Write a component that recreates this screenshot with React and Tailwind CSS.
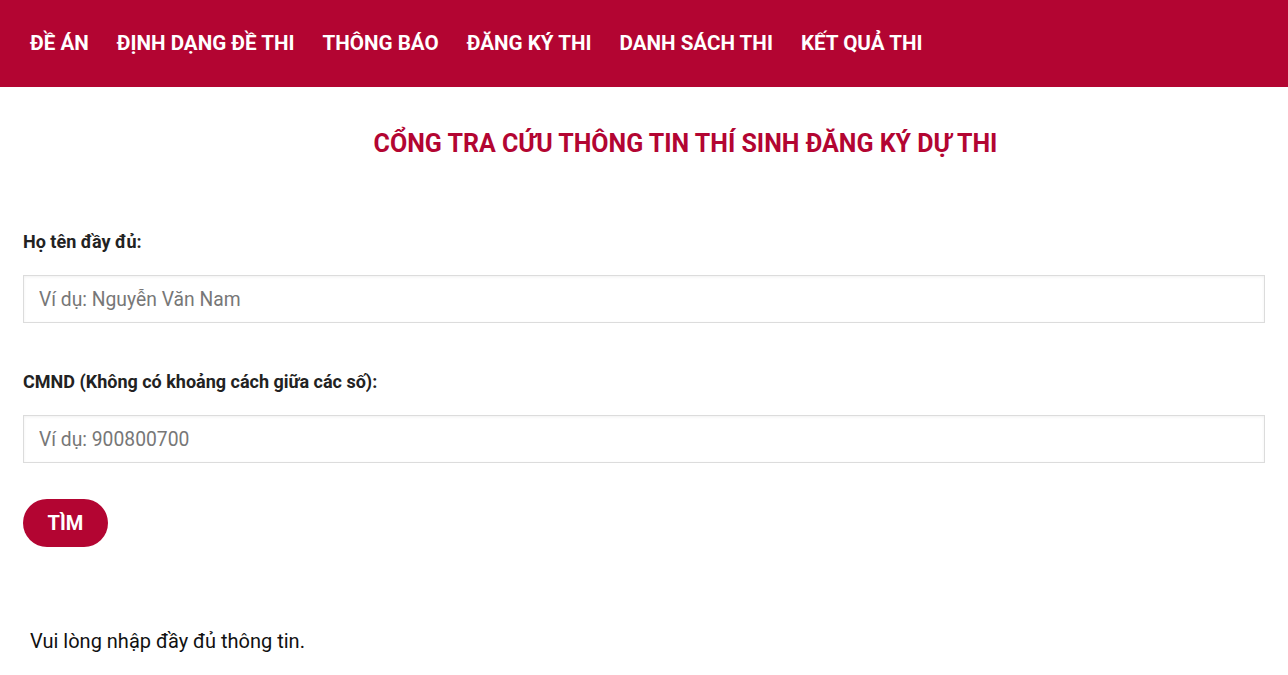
import React from 'react'

const NAV = ['ĐỀ ÁN', 'ĐỊNH DẠNG ĐỀ THI', 'THÔNG BÁO', 'ĐĂNG KÝ THI', 'DANH SÁCH THI', 'KẾT QUẢ THI']

export default function App() {
  return (
    <div className="min-h-screen bg-white" style={{ fontFamily: 'Roboto, "Noto Sans", sans-serif' }}>
      {/* Top nav */}
      <header className="h-[87px] bg-[#b30532] flex items-center px-[30px]">
        <nav className="flex items-center gap-[28px]">
          {NAV.map(n => (
            <a key={n} className="text-white font-bold text-[20.6px] leading-none cursor-pointer">
              {n}
            </a>
          ))}
        </nav>
      </header>

      <main className="px-[23px]">
        <h1 className="text-center pl-[83px] pt-[42px] text-[25px] leading-[30px] font-bold text-[#b30532]">
          CỔNG TRA CỨU THÔNG TIN THÍ SINH ĐĂNG KÝ DỰ THI
        </h1>

        <form className="mt-[72px] flex flex-col">
          <label className="text-[18px] font-bold text-[#222] leading-[22px]">Họ tên đầy đủ:</label>
          <input
            placeholder="Ví dụ: Nguyễn Văn Nam"
            className="mt-[22px] h-[48px] w-full border border-[#dcdcdc] shadow-[inset_0_1px_3px_rgba(0,0,0,0.06)] px-[15px] text-[19.3px] text-[#333] placeholder:text-[#777] outline-none"
          />

          <label className="mt-[48px] text-[18px] font-bold text-[#222] leading-[22px]">
            CMND (Không có khoảng cách giữa các số):
          </label>
          <input
            placeholder="Ví dụ: 900800700"
            className="mt-[22px] h-[48px] w-full border border-[#dcdcdc] shadow-[inset_0_1px_3px_rgba(0,0,0,0.06)] px-[15px] text-[19.3px] text-[#333] placeholder:text-[#777] outline-none"
          />

          <div className="mt-[36px]">
            <button
              type="button"
              className="h-[48px] w-[85px] rounded-full bg-[#b30532] text-white font-bold text-[20px]"
            >
              TÌM
            </button>
          </div>
        </form>

        <p className="mt-[82px] pl-[7px] text-[20px] text-[#111] leading-[24px]">
          Vui lòng nhập đầy đủ thông tin.
        </p>
      </main>
    </div>
  )
}
